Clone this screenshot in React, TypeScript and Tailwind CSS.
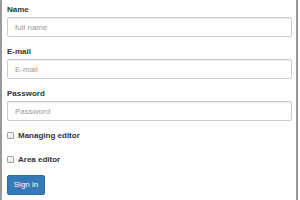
import React from 'react';

const inputClass =
  'block w-full h-[20px] rounded-[2px] border border-[#ccc] bg-white px-[7px] text-[8px] text-[#555] placeholder:text-[#999] outline-none shadow-[inset_0_1px_1px_rgba(0,0,0,0.075)]';

function Field({ label, placeholder, type = 'text' }: { label: string; placeholder: string; type?: string }) {
  return (
    <div className="mb-[9px]">
      <label className="block mb-[2px] text-[8px] leading-[11px] font-bold text-[#333]">{label}</label>
      <input type={type} placeholder={placeholder} className={inputClass} />
    </div>
  );
}

function Check({ label }: { label: string }) {
  return (
    <label className="flex items-center h-[11px] gap-[4px] text-[8px] font-bold text-[#333]">
      <span className="w-[7px] h-[7px] rounded-[1px] border border-[#a0a0a0] bg-gradient-to-b from-white to-[#e6e6e6]" />
      {label}
    </label>
  );
}

export default function App() {
  return (
    <div
      className="w-[298px] h-[200px] bg-white border-l-2 border-r-2 border-[#9a9a9a] pl-[5px] pr-[4px] pt-[4px]"
      style={{ fontFamily: '"Liberation Sans", Arial, sans-serif' }}
    >
      <form onSubmit={e => e.preventDefault()}>
        <Field label="Name" placeholder="full name" />
        <Field label="E-mail" placeholder="E-mail" />
        <Field label="Password" placeholder="Password" type="password" />
        <div className="mt-[9px]">
          <Check label="Managing editor" />
        </div>
        <div className="mt-[13px]">
          <Check label="Area editor" />
        </div>
        <button
          type="submit"
          className="mt-[10px] w-[38px] h-[20px] rounded-[2px] bg-[#337ab7] border border-[#2e6da4] text-white text-[8px] leading-none"
        >
          Sign in
        </button>
      </form>
    </div>
  );
}
